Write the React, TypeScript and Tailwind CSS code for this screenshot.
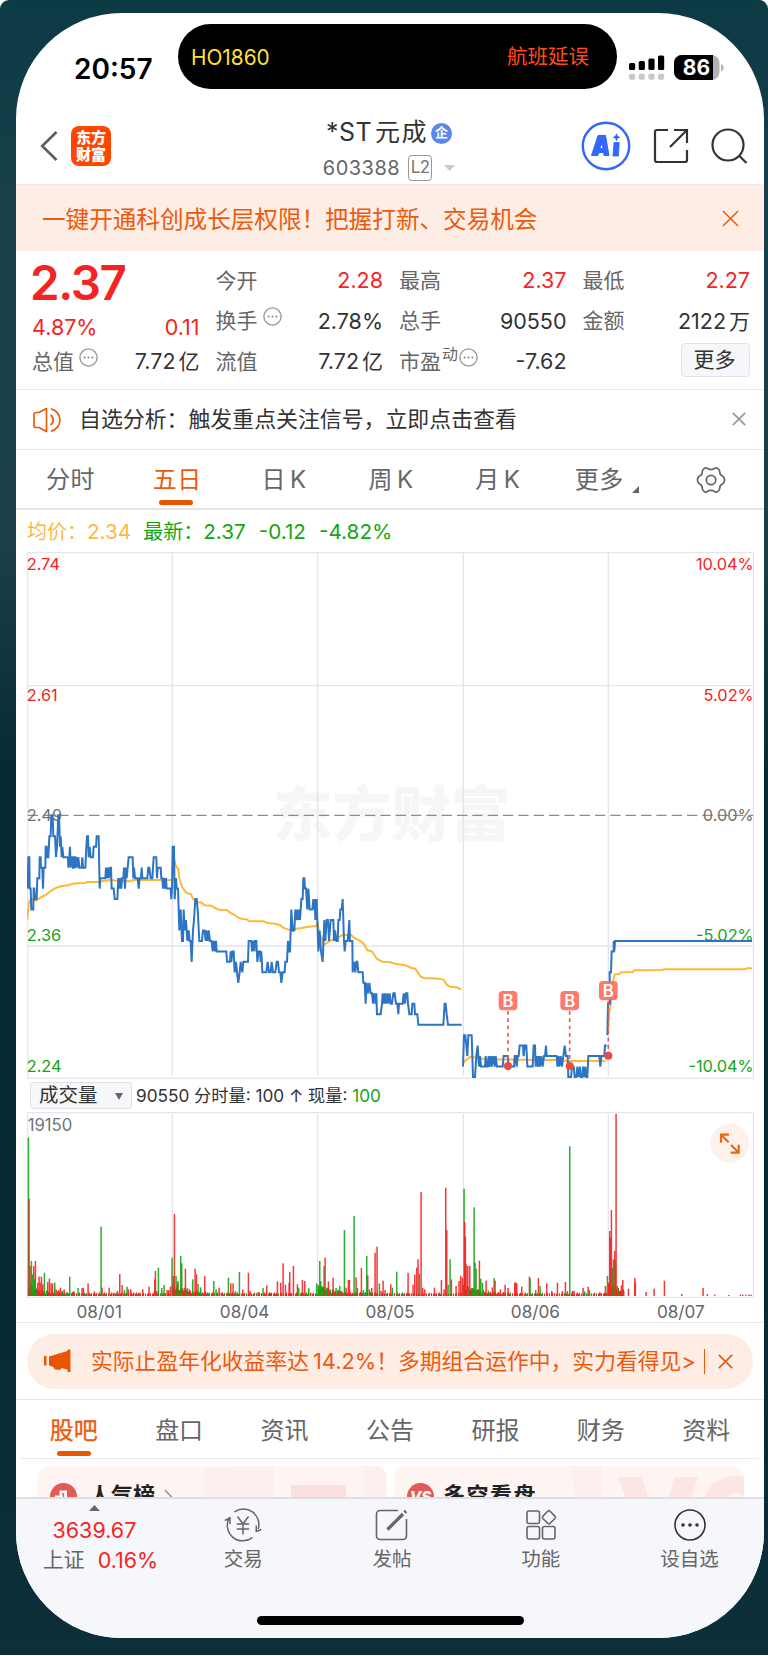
import React from "react";

const RED = "#f52323";
const GREEN = "#14a514";

type Quote = { label: string; value: string; red?: boolean; info?: boolean; sup?: string };

const quoteColumns: Quote[][] = [
  [
    { label: "今开", value: "2.28", red: true },
    { label: "换手", value: "2.78%", info: true },
    { label: "流值", value: "7.72亿" },
  ],
  [
    { label: "最高", value: "2.37", red: true },
    { label: "总手", value: "90550" },
    { label: "市盈", value: "-7.62", info: true, sup: "动" },
  ],
];

const periods = ["分时", "五日", "日K", "周K", "月K", "更多"];
const sections = ["股吧", "盘口", "资讯", "公告", "研报", "财务", "资料"];
const dates = ["08/01", "08/04", "08/05", "08/06", "08/07"];

// Both charts are drawn in thirds of a pixel: 2181 units for 727px.
const gridX = [436, 872, 1309, 1744];

// Price ticks: x and number of 0.01 steps below 2.49. dx shifts the whole run.
const priceRuns: { dx: number; pts: string }[] = [
  {
    dx: -81,
    pts: "83,7 85,4 88,4 89,7 92,7 94,9 100,9 101,7 103,7 105,8 110,8 112,6 118,6 119,4 122,4 123,5 127,5 129,7 131,5 136,5 137,3 140,3 141,4 145,4 148,2 152,2 154,0 158,0 160,2 165,2 168,4 171,3 175,0 177,0 180,3 182,2 185,4 187,3 190,4 204,4 205,5 208,4 210,3 212,5 214,4 217,4 219,5 222,5 223,4 226,4 228,5 230,4 233,5 235,4 238,5 245,5 247,4 249,5 256,5 259,3 261,2 264,2 266,4 269,3 272,4 279,4 281,3 288,3 290,2 296,2 299,7 301,6 316,6 318,5 321,6 324,5 327,6 330,5 333,5 335,7 341,7 344,8 352,8 355,6 358,7 361,6 364,7 366,6 370,6 372,5 375,7 378,5 380,6 383,5 386,4 398,4 400,6 402,5 405,6 413,6 416,7 419,6 423,6 425,5 427,6 442,6 445,5 448,5 452,6 457,6 461,4 469,4 471,6 473,5 482,5 484,6 487,6 489,7 492,6 494,7 498,6 500,7 512,7 514,8 516,7 518,3 522,3 524,8 528,6 530,7 534,7 536,9 538,11 542,9 546,12 549,12 551,9 554,11 558,10 562,12 566,11 569,12 572,12 575,14 579,11 582,10 586,8 590,8 593,9 598,12 606,12 609,11 614,11 617,12 619,11 623,12 626,11 630,12 635,12 638,13 642,12 645,13 648,12 650,13 679,13 681,14 690,14 692,13 694,14 697,13 701,13 704,15 708,14 711,15 715,16 719,15 722,14 727,15 730,14 744,14 746,12 754,12 756,13 759,12 763,13 765,12 769,12 772,14 776,13 780,13 782,14 784,13 787,15 799,15 803,14 807,15 812,15 815,14 819,15 826,15 830,14 834,14 837,15 841,15 844,16 848,15 854,15 856,14 861,14 864,12 867,13 870,13 874,9 878,11 883,11 886,9 889,10 893,9 895,10 898,9 900,10 902,9 904,8 908,8 910,6 913,6 915,7 918,7 922,9 925,7 929,9 937,9 940,8 942,9 944,8 946,10 950,8 952,10 955,13 959,11 963,13 968,14 973,10 976,12 980,10 984,10 987,12 992,10 1000,10 1002,12 1005,11 1009,12 1013,12 1015,10 1019,10 1021,9 1025,9 1028,8 1032,12 1034,13 1037,12 1043,12 1046,11 1048,10 1050,12 1057,12 1058,15 1062,14 1066,15 1069,14 1072,14 1075,15 1088,15 1090,16 1094,16 1097,18 1100,16 1104,17 1108,16 1112,17 1116,17 1119,18 1122,17 1127,18 1129,17 1131,19 1142,19 1146,18 1148,17 1152,18 1155,17 1158,18 1162,17 1165,18 1169,17 1172,18 1176,18 1180,17 1184,17 1188,18 1192,18 1195,19 1197,18 1208,18 1211,17 1215,18 1218,17 1222,17 1224,18 1228,19 1235,19 1237,18 1243,18 1245,19 1252,19 1255,20 1330,20 1334,18 1337,18 1340,19 1344,20 1385,20",
  },
  {
    dx: 1239,
    pts: "69,24 72,21 76,21 79,22 82,23 85,21 95,21 99,25 105,25 109,23 113,22 117,24 120,23 123,24 135,24 137,23 140,24 143,24 146,23 149,24 153,23 155,24 160,23 164,24 167,23 171,24 188,24 191,23 203,23 206,24 222,24 224,23 227,23 230,24 233,23 236,23 239,22 249,22 251,23 254,22 259,22 262,24 278,24 281,22 285,22 287,24 291,23 294,24 297,23 300,24 304,23 308,24 312,23 315,23 318,22 320,23 350,23 352,24 355,23 358,24 362,23 366,24 370,23 374,22 378,23 383,23 385,25 393,25 396,24 401,24 404,25 409,25 412,24 415,25 420,24 422,25 427,25 429,24 433,25 436,24 439,25 442,25 445,23 478,23 481,24 484,23 493,23 495,22 500,22",
  },
  { dx: 1239, pts: "502,21 504,18 510,18 509,15 513,15 515,13 521,13 521,12 523,13 525,12 936,12" },
];

// Average price line, y counted from 684 units below the top of the chart.
const averageRuns: { dx: number; pts: string }[] = [
  {
    dx: -81,
    pts: "82,418 86,370 92,358 108,362 118,355 130,348 140,343 150,335 160,328 170,323 185,318 205,316 215,312 232,310 255,309 262,306 295,306 310,303 330,300 352,302 390,304 398,300 517,300 521,235 528,258 535,268 538,295 545,318 555,335 562,340 573,343 580,358 595,367 606,368 612,376 635,377 645,384 658,389 680,390 690,398 705,405 715,413 728,417 740,418 748,424 790,424 802,429 825,431 838,434 848,442 865,449 878,452 885,447 905,444 925,440 950,438 953,425 956,455 962,468 972,494 982,488 998,478 1012,474 1025,466 1053,464 1062,474 1080,482 1092,492 1102,511 1116,514 1130,536 1148,545 1168,546 1185,551 1215,556 1235,564 1246,566 1262,590 1272,594 1320,596 1332,600 1340,614 1350,620 1370,622 1384,629",
  },
  { dx: 1239, pts: "69,850 78,840 92,830 110,834 140,838 240,839 350,840 385,843 497,843" },
  { dx: 1239, pts: "503,760 508,700 515,650 520,600 524,583 538,582 543,577 578,576 583,571 668,570 672,568 915,568 920,565 936,565" },
];

const buys = [
  { x: 1443, box: 1312, dot: 1542 },
  { x: 1628, box: 1312, dot: 1542 },
  { x: 1744, box: 1282, dot: 1511 },
];

// Volume bars: colour, x, height
const volumes =
  "g4,475 r6,292 r9,90 g13,105 g16,65 r20,90 r25,105 g22,50 r32,40 r36,58 r39,40 r43,58 g52,70 r47,35 r62,42 r67,52 r72,38 r76,38 g83,40 r87,20 r95,18 r100,25 g105,15 r111,20 g118,10 g128,58 r140,15 g153,24 r165,24 r169,25 r183,38 r202,14 g222,208 r225,25 r246,25 r254,10 r261,10 r271,15 r278,66 r285,33 g292,18 g300,28 r304,20 r311,20 r320,10 r337,10 r347,20 r366,28 r383,50 r385,75 g394,85 r389,15 g404,24 g411,33 r420,18 r425,18 r430,28 g435,115 r439,60 g447,60 g453,45 r451,40 r442,246 g461,120 g464,98 r467,20 r475,82 r472,25 g481,24 r487,20 g497,50 r504,82 r508,65 g513,36 g521,26 r533,60 g544,8 g560,45 g567,20 r576,25 r583,10 g604,55 r611,38 r618,38 g625,15 g637,72 r647,20 r664,70 r669,15 g678,5 r693,12 g708,24 r719,32 r731,10 r751,44 r761,40 r768,98 r775,34 r786,40 r788,72 r799,90 r811,35 g815,25 r826,48 r833,45 g845,24 r851,10 g869,38 g874,30 g878,105 g881,45 g891,90 r894,115 g899,25 r904,44 g909,20 r918,55 g927,24 r933,15 g938,30 r944,15 g952,198 r957,25 r964,48 r967,48 g981,240 r987,56 g991,24 r1003,84 g1009,18 g1019,120 r1022,62 g1027,20 r1034,24 r1044,130 r1050,148 g1057,38 r1062,15 r1068,46 r1074,18 r1091,35 g1096,25 g1109,73 r1143,70 r1158,34 r1163,64 r1169,85 r1173,110 g1177,66 r1182,312 r1187,24 r1193,20 r1222,25 r1243,48 r1251,20 r1256,325 r1259,198 g1263,34 g1269,110 r1273,50 r1287,30 r1296,45 r1301,60 r1306,55 g1311,322 r1313,222 r1315,178 r1317,95 r1322,90 r1328,90 g1323,20 r1333,24 g1341,266 g1344,100 g1347,82 r1357,106 g1361,52 g1366,40 r1377,46 r1396,26 g1401,54 r1404,46 r1420,20 r1434,34 r1443,24 r1463,40 r1466,40 r1469,38 r1484,28 r1507,58 g1509,52 g1526,18 r1534,54 g1539,30 r1559,38 r1574,15 r1591,40 r1606,15 r1615,42 g1621,15 g1628,449 r1636,15 r1641,16 r1668,24 g1673,14 r1683,28 g1687,18 r1719,10 r1735,30 g1741,60 r1745,40 r1748,195 r1750,175 r1753,258 g1756,85 r1759,110 r1763,136 g1765,106 r1767,546 r1771,30 r1783,32 r1787,48 r1790,14 r1804,22 r1823,54 r1825,40 r1857,12 r1881,22 r1912,46 r1964,6 r2028,24 r2041,6 r2063,4 r2105,3 r2140,4 r2147,4 r2156,4 r2165,4 r2172,4"
    .split(" ")
    .map((s) => {
      const [x, h] = s.slice(1).split(",").map(Number);
      return { x, h, color: s[0] === "g" ? GREEN : RED };
    });

// Low background trading between the named bars, heavier right after each open
const lowVolumes = Array.from({ length: 600 }, (_, i) => {
  const x = 4 + i * 3;
  const r = ((i * 7919 + 13) % 101) / 101;
  const r2 = ((i * 3571 + 29) % 97) / 97;
  const sinceOpen = x % 436;
  const h = 2 + r * 9 + Math.exp(-sinceOpen / 45) * (12 + r2 * 24);
  return { x, h, color: r2 > 0.7 ? GREEN : RED };
}).filter((b) => b.x < 1790 && b.h > 5);

function toPath(pts: string, dx: number, y: (v: number) => number) {
  return pts
    .split(" ")
    .map((p) => {
      const [a, b] = p.split(",").map(Number);
      return `${a + dx},${y(b)}`;
    })
    .join(" ");
}

function Info() {
  return (
    <svg className="w-[19px] h-[19px] shrink-0" viewBox="0 0 19 19" fill="none">
      <circle cx="9.5" cy="9.5" r="8.6" stroke="#999" strokeWidth="1.4" />
      <circle cx="5.6" cy="9.5" r="1" fill="#888" />
      <circle cx="9.5" cy="9.5" r="1" fill="#888" />
      <circle cx="13.4" cy="9.5" r="1" fill="#888" />
    </svg>
  );
}

function Close({ className, width = 1.6 }: { className: string; width?: number }) {
  return (
    <svg className={className} viewBox="0 0 18 18" fill="none" stroke="currentColor" strokeWidth={width}>
      <path d="M1 1 17 17M17 1 1 17" />
    </svg>
  );
}

function QuoteRow({ q }: { q: Quote }) {
  const m = q.value.match(/^([-\d.%]+)(.*)$/)!;
  return (
    <div className="flex h-[40.5px] items-center">
      <span className="-ml-px text-[21px] text-[#666]">{q.label}</span>
      {q.sup && <span className="-mt-3.5 ml-px text-[16px] text-[#666]">{q.sup}</span>}
      {q.info && <span className={q.sup ? "-mt-2 ml-px" : "-mt-2 ml-[5px]"}><Info /></span>}
      <span className={`ml-auto text-[21.5px] ${q.red ? "text-[#f52323]" : "text-[#333]"}`}>
        {m[1]}
        {m[2] && <span className="ml-[3px] text-[21px]">{m[2]}</span>}
      </span>
    </div>
  );
}

function StatusBar() {
  return (
    <div className="flex h-[85px] shrink-0 items-start">
      <span className="ml-[58px] mt-[39px] w-[79px] text-[28px] leading-[34px] font-semibold text-black">20:57</span>
      <div className="ml-[25px] mt-[11px] flex h-[65px] w-[439px] items-center justify-between rounded-full bg-black pl-[13px] pr-[28px] pt-[2px]">
        <span className="text-[20.8px] text-[#ffe135]">HO1860</span>
        <span className="text-[20.5px] text-[#ff4a1c]">航班延误</span>
      </div>
      <svg className="ml-[12px] mt-[42px] h-[26px] w-[97px]" viewBox="0 0 97 26">
        <g fill="#000">
          <rect x="0" y="8" width="6.2" height="7" rx="1.5" />
          <rect x="9.7" y="6" width="6.2" height="9" rx="1.5" />
          <rect x="19.4" y="3.5" width="6.2" height="11.5" rx="1.5" />
          <rect x="29" y="0.5" width="6.2" height="14.5" rx="1.5" />
        </g>
        <g fill="#c8c8c8">
          <rect x="0" y="18.7" width="6.2" height="6" rx="1.8" />
          <rect x="9.7" y="18.7" width="6.2" height="6" rx="1.8" />
          <rect x="19.4" y="18.7" width="6.2" height="6" rx="1.8" />
          <rect x="29" y="18.7" width="6.2" height="6" rx="1.8" />
        </g>
        <rect x="45" y="0" width="45.5" height="25" rx="8" fill="#b3b3b3" />
        <path d="M53 0H84V25H53a8 8 0 0 1-8-8V8a8 8 0 0 1 8-8Z" fill="#000" />
        <path d="M92 9c3.500 1 3.500 6.500 0 7.500Z" fill="#b3b3b3" />
        <text x="67.500" y="20" textAnchor="middle" fontSize="21" fontWeight="700" fill="#fff">86</text>
      </svg>
    </div>
  );
}

function Header() {
  return (
    <div className="flex h-[87px] shrink-0 items-start border-b border-[#e9e9ed]">
      <div className="flex w-[240px] items-center pl-6 pt-[28px]">
        <svg className="h-[30px] w-[18px]" viewBox="0 0 18 30" fill="none" stroke="#5d5d5d" strokeWidth="2.600">
          <path d="M16.500 1 2.200 15l14.300 14" />
        </svg>
        <div className="ml-[13px] flex h-[40px] w-[40px] flex-col items-center justify-center rounded-[8px] bg-[#ff4500] text-[15px] leading-[17px] font-black text-white">
          <span>东方</span>
          <span>财富</span>
        </div>
      </div>
      <div className="w-[268px] pt-[16px]">
        <div className="flex h-[38px] items-center justify-center pr-[2px] text-[25px] text-[#333]">
          <span className="tracking-[0.5px]">*ST</span>
          <span className="ml-[3px] tracking-[1.5px]">元成</span>
          <span className="ml-[3px] flex h-[21px] w-[21px] items-center justify-center rounded-full bg-[#5c87e8] text-[13px] font-bold text-white">企</span>
        </div>
        <div className="flex h-[32px] items-center justify-center pr-[2px] text-[20px] text-[#666]">
          <span className="tracking-[0.5px]">603388</span>
          <span className="ml-2 flex h-[26px] w-[24px] items-center justify-center rounded-[4px] border border-[#999] text-[17px] tracking-[-0.5px] text-[#777]">L2</span>
          <svg className="ml-3 h-[6px] w-[11px]" viewBox="0 0 11 6"><path d="M0 0H11L5.500 6Z" fill="#c9c9c9" /></svg>
        </div>
      </div>
      <div className="flex flex-1 items-center pl-[57px] pt-[23px]">
        <svg className="h-[50px] w-[50px]" viewBox="0 0 50 50">
          <circle cx="25" cy="25" r="23.200" fill="none" stroke="#3366ff" strokeWidth="2.400" />
          <path fillRule="evenodd" d="M17 14.500h7.500l3.500 20h-5l-.5-3h-4.500l-1.200 3H10.500ZM18.600 27.500h3.400l-.7-6Z" fill="#3366ff" stroke="#3366ff" strokeWidth="1" strokeLinejoin="round" />
          <path d="M33 21.500h5.200L37.400 35h-5.500Z" fill="#3366ff" stroke="#3366ff" strokeWidth=".8" strokeLinejoin="round" />
          <path d="m35.500 12.200 1.300 2.700 2.700 1.300-2.700 1.300-1.300 2.700-1.300-2.700-2.700-1.300 2.700-1.300Z" fill="#3366ff" />
        </svg>
        <svg className="ml-[21px] h-[38px] w-[38px]" viewBox="0 0 38 38" fill="none" stroke="#333" strokeWidth="2.200">
          <path d="M16 3H5a2 2 0 0 0-2 2v28a2 2 0 0 0 2 2h28a2 2 0 0 0 2-2V23" />
          <path d="M18 20 35 3M22 3H35V16" />
        </svg>
        <svg className="ml-[20px] h-[38px] w-[38px]" viewBox="0 0 38 38" fill="none" stroke="#333" strokeWidth="2.200">
          <circle cx="18" cy="18" r="15.500" />
          <path d="M29 28.500 36.500 36" />
        </svg>
      </div>
    </div>
  );
}

function PriceChart() {
  return (
    <svg className="block h-[527px] w-[727px]" viewBox="0 0 2181 1581" fill="none">
      <text x="1094" y="852" textAnchor="middle" fontSize="178" fontWeight="900" fill="#f6f6f6">东方财富</text>
      <g stroke="#e2e5ee" strokeWidth="4">
        {gridX.map((x) => <path key={x} d={`M${x} 2V1573`} />)}
        <path d="M2 401H2179M2 1182H2179" />
      </g>
      <path d="M2 2H2179V1579H2Z" stroke="#e6e6e9" strokeWidth="4" />
      <path d="M2 790H2179" stroke="#8c8c8c" strokeWidth="4" strokeDasharray="31 15" />
      <g fontSize="49" fill={RED}>
        <text x="-1" y="54">2.74</text>
        <text x="-1" y="447">2.61</text>
        <text x="2180" y="54" textAnchor="end">10.04%</text>
        <text x="2180" y="447" textAnchor="end">5.02%</text>
      </g>
      <g fontSize="49" fill="#737373">
        <text x="-1" y="807">2.49</text>
        <text x="2180" y="807" textAnchor="end">0.00%</text>
      </g>
      <g fontSize="49" fill={GREEN}>
        <text x="-1" y="1167">2.36</text>
        <text x="-1" y="1560">2.24</text>
        <text x="2180" y="1167" textAnchor="end">-5.02%</text>
        <text x="2180" y="1560" textAnchor="end">-10.04%</text>
      </g>
      {averageRuns.map((r, i) => (
        <polyline key={i} points={toPath(r.pts, r.dx, (v) => v + 684)} stroke="#fdb933" strokeWidth="6" />
      ))}
      {priceRuns.map((r, i) => (
        <polyline key={i} points={toPath(r.pts, r.dx, (v) => 790 + v * 31.4)} stroke="#2e74c4" strokeWidth="6" />
      ))}
      {buys.map((b) => (
        <g key={b.x}>
          <path d={`M${b.x} ${b.box + 65}V${b.dot}`} stroke="#f8564a" strokeWidth="5" strokeDasharray="11 11" />
          <circle cx={b.x} cy={b.dot} r="12" fill="#ec4b45" />
          <rect x={b.x - 28} y={b.box + 5} width="56" height="58" rx="12" fill="#ff6f5f" fillOpacity=".92" />
          <text x={b.x} y={b.box + 52} textAnchor="middle" fontSize="50" fontWeight="600" fill="#fff">B</text>
        </g>
      ))}
    </svg>
  );
}

function VolumeChart() {
  return (
    <svg className="block h-[186px] w-[727px]" viewBox="0 0 2181 558" fill="none">
      <g stroke="#e2e5ee" strokeWidth="4">
        {gridX.map((x) => <path key={x} d={`M${x} 6V552`} />)}
      </g>
      <path d="M2 2H2179V556H2Z" stroke="#e6e6e9" strokeWidth="4" />
      <text x="2" y="56" fontSize="50" fill="#737373">19150</text>
      {lowVolumes.map((b, i) => (
        <rect key={i} x={b.x - 1.5} y={552 - b.h} width="3.5" height={b.h} fill={b.color} />
      ))}
      {volumes.map((b, i) => (
        <rect key={i} x={b.x - 2} y={552 - b.h} width="4.5" height={b.h} fill={b.color} fillOpacity=".9" />
      ))}
      <circle cx="2108" cy="94" r="58" fill="#fef1ea" />
      <g stroke="#ee6414" strokeWidth="6.500">
        <path d="M2082 92V68h24M2083 69l22 22" />
        <path d="M2135 98v24h-24M2134 121l-22-22" />
      </g>
    </svg>
  );
}

function BottomBar() {
  const icon = "h-[36px] w-[40px]";
  const items = [
    {
      label: "交易",
      svg: (
        <svg className={icon} viewBox="0 0 40 36" fill="none" stroke="#666" strokeWidth="1.500">
          <path d="M11.500 4.800A15.500 15.500 0 0 1 35.200 22M6.500 10.500A15.500 15.500 0 0 0 29.500 30.500" />
          <path d="m1.800 13.500 5.200-2.500v6M38.300 22.500l-5 2v-6" />
          <path d="m14.500 9.500 5.500 7.500 5.500-7.500M20 17v10.500M13.800 17h12.400M13.800 22h12.400" />
        </svg>
      ),
    },
    {
      label: "发帖",
      svg: (
        <svg className={icon} viewBox="0 0 40 36" fill="none" stroke="#666" strokeWidth="1.600">
          <path d="M26 3.500H8a3.500 3.500 0 0 0-3.500 3.500V29A3.500 3.500 0 0 0 8 32.500H31a3.500 3.500 0 0 0 3.500-3.500V12" />
          <path d="M15.500 22.500 31 7" strokeWidth="3.200" />
          <path d="m32.500 5.500 1.500-1.500" strokeWidth="3.200" />
        </svg>
      ),
    },
    {
      label: "功能",
      svg: (
        <svg className={icon} viewBox="0 0 40 36" fill="none" stroke="#666" strokeWidth="1.600">
          <rect x="6" y="4" width="12.500" height="12.500" rx="2" />
          <rect x="6" y="19.500" width="12.500" height="12.500" rx="2" />
          <rect x="21.500" y="19.500" width="12.500" height="12.500" rx="2" />
          <path d="m26.700 4.300-4.800 4.800a1.700 1.700 0 0 0 0 2.400l4.800 4.800a1.700 1.700 0 0 0 2.400 0l4.800-4.800a1.700 1.700 0 0 0 0-2.400l-4.800-4.800a1.700 1.700 0 0 0-2.400 0Z" />
        </svg>
      ),
    },
    {
      label: "设自选",
      svg: (
        <svg className={icon} viewBox="0 0 40 36" fill="none">
          <circle cx="20" cy="18" r="15" stroke="#333" strokeWidth="1.600" />
          <circle cx="13" cy="18" r="1.800" fill="#333" />
          <circle cx="20" cy="18" r="1.800" fill="#333" />
          <circle cx="27" cy="18" r="1.800" fill="#333" />
        </svg>
      ),
    },
  ];
  return (
    <div className="flex h-[141px] shrink-0 flex-col items-center border-t-2 border-[#dcdfe5] bg-[#f6f7fa]">
      <div className="flex w-full flex-1 pl-[4px]">
        <div className="flex flex-1 flex-col items-center text-[21.5px] text-[#f52323]">
          <svg className="mt-[6px] h-[6px] w-[11px]" viewBox="0 0 11 6"><path d="M0 6H11L5.500 0Z" fill="#666" /></svg>
          <span className="mt-[4px] leading-[30px]">3639.67</span>
          <div className="flex gap-[13px] leading-[30px] ml-3">
            <span className="text-[21px] text-[#666]">上证</span>
            <span>0.16%</span>
          </div>
        </div>
        {items.map((it) => (
          <div key={it.label} className="flex flex-1 flex-col items-center pt-[8px] text-[19.5px] leading-[30px] text-[#666]">
            {it.svg}
            <span className="mt-px">{it.label}</span>
          </div>
        ))}
      </div>
      <div className="mb-[13px] h-[9px] w-[267px] rounded-full bg-black" />
    </div>
  );
}

export default function App() {
  return (
    <div className="h-[1656px] w-[768px] overflow-hidden bg-white font-['Inter','Noto_Sans_CJK_SC',sans-serif]">
      <div className="h-[1655px] overflow-hidden rounded-[9px] rounded-b-none bg-[linear-gradient(to_bottom,#0c3a45_0%,#17404a_12%,#1b3f49_33%,#052a34_47%,#052a34_75%,#0c2f39_100%)] pl-4 pt-[13px]">
        <div className="flex h-[1625px] w-[748px] flex-col overflow-hidden rounded-[106px] bg-white">
          <StatusBar />
          <Header />

          <div className="flex h-[66px] shrink-0 items-center justify-between bg-[#fdede5] pl-[26px] pr-[25px] text-[#ee5a0c]">
            <span className="pt-[3px] text-[23.6px]">一键开通科创成长层权限！把握打新、交易机会</span>
            <Close className="h-[17px] w-[17px]" />
          </div>

          {/* Quote panel */}
          <div className="flex h-[139px] shrink-0 gap-[17px] border-b border-[#e9e9ed] px-[17px] pt-[9px] pr-[14px] text-[21px]">
            <div className="flex flex-1 flex-col text-[#f52323]">
              <div className="-ml-[3px] h-[46px] text-[47.5px] leading-[45px] font-semibold tracking-[-1.4px]">2.37</div>
              <div className="-ml-px flex h-[41px] items-center justify-between pt-px text-[21.5px]">
                <span>4.87%</span>
                <span>0.11</span>
              </div>
              <div className="-mt-[6px]"><QuoteRow q={{ label: "总值", value: "7.72亿", info: true }} /></div>
            </div>
            {quoteColumns.map((col, i) => (
              <div key={i} className="flex-1">
                {col.map((q) => <QuoteRow key={q.label} q={q} />)}
              </div>
            ))}
            <div className="flex-1">
              <QuoteRow q={{ label: "最低", value: "2.27", red: true }} />
              <QuoteRow q={{ label: "金额", value: "2122万" }} />
              <div className="flex h-[38px] items-center justify-end">
                <span className="flex h-[34px] w-[69px] items-center justify-center rounded-[4px] border border-[#dfe1e6] bg-[#f6f7fa] pr-[2px] text-[#333]">更多</span>
              </div>
            </div>
          </div>

          {/* Notice */}
          <div className="flex h-[60px] shrink-0 items-center border-b border-[#e9e9ed] pl-[17px] pr-[18px]">
            <svg className="h-[26px] w-[29px]" viewBox="0 0 29 26" fill="none" stroke="#ee5a0c" strokeWidth="1.700" strokeLinejoin="round">
              <path d="M6 5.500H3A2 2 0 0 0 1 7.500V18.500A2 2 0 0 0 3 20.500H6L13.500 24.500V1.500Z" />
              <path d="M17.500 8a6 6 0 0 1 0 10M18 1.800a11.500 11.500 0 0 1 0 22.400" />
            </svg>
            <span className="ml-[17px] text-[21.9px] text-[#333]">自选分析：触发重点关注信号，立即点击查看</span>
            <Close className="ml-auto mb-[2px] h-[14px] w-[14px] text-[#999]" width={2.2} />
          </div>

          {/* Period tabs */}
          <div className="flex h-[60px] shrink-0 border-b-2 border-[#e3e4e7] text-[24px] text-[#666]">
            {periods.map((p) => (
              <div key={p} className={`flex flex-1 flex-col items-center pt-[12px] ${p === "五日" ? "text-[#ee5a0c]" : ""}`}>
                <span className={`flex items-end leading-[36px] tracking-[0.5px] ${p === "更多" ? "ml-1.5" : "ml-0.5"}`}>
                  {p.endsWith("K") ? <>{p[0]}<span className="ml-1">K</span></> : p}
                  {p === "更多" && (
                    <svg className="mb-[5px] ml-2 h-[7px] w-[7px]" viewBox="0 0 7 7"><path d="M7 0V7H0Z" fill="#666" /></svg>
                  )}
                </span>
                {p === "五日" && <span className="mt-[2px] h-[5px] w-[34px] rounded-full bg-[#ea5504]" />}
              </div>
            ))}
            <div className="flex flex-1 items-start justify-center pt-[15px]">
              <svg className="h-[30px] w-[30px]" viewBox="0 0 30 30" fill="none" stroke="#666" strokeWidth="1.700" strokeLinejoin="round">
                <path d="M8.200 3.500Q9.300 2.200 11 3.300Q15 5.800 19 3.300Q20.700 2.200 21.800 3.500Q23.800 4.800 23.800 7.200Q23.800 9.800 26.400 11Q28.500 12 28.500 15Q28.500 18 26.400 19Q23.800 20.200 23.800 22.800Q23.800 25.200 21.800 26.500Q20.700 27.800 19 26.700Q15 24.200 11 26.700Q9.300 27.800 8.200 26.500Q6.200 25.200 6.200 22.800Q6.200 20.200 3.600 19Q1.500 18 1.500 15Q1.500 12 3.600 11Q6.200 9.800 6.200 7.200Q6.200 4.800 8.200 3.500Z" />
                <circle cx="15" cy="15" r="4.700" />
              </svg>
            </div>
          </div>

          {/* Charts */}
          <div className="shrink-0 border-b border-[#e9e9ed] pl-[11px]">
            <div className="flex h-[42px] items-center pt-[2px] text-[20px] text-[#14a514]">
              <span className="text-[#fdb944]">均价：<span className="text-[20.7px]">2.34</span></span>
              <span className="ml-[12px]">最新：<span className="text-[20.7px]">2.37</span></span>
              <span className="ml-[13px] text-[20.7px]">-0.12</span>
              <span className="ml-[13px] text-[20.7px]">-4.82%</span>
            </div>
            <PriceChart />
            <div className="flex h-[33px] items-center pl-[3px] text-[17px] text-[#333]">
              <span className="mr-1 flex h-[27px] w-[102px] items-center justify-between rounded-[3px] border border-[#dfe1e6] bg-[#f6f7fa] pl-[8px] pr-[8px] pt-px text-[19.5px] leading-none">
                成交量
                <svg className="h-[7px] w-[8px]" viewBox="0 0 8 7"><path d="M0 0H8L4 7Z" fill="#666" /></svg>
              </span>
              <span className="pt-px text-[17.2px]">90550 分时量: 100 ↑ 现量: <span className="text-[#14a514]">100</span></span>
            </div>
            <VolumeChart />
            <div className="flex h-[24px] w-[727px] items-center pt-[3px] text-[17.2px] text-[#666]">
              {dates.map((d) => <span key={d} className="flex-1 pr-px text-center">{d}</span>)}
            </div>
          </div>

          {/* Promo */}
          <div className="flex h-[77px] shrink-0 items-center border-b border-[#e9e9ed] px-[11px]">
            <div className="flex h-[55px] w-full items-center rounded-full bg-[#fdede5] pl-[17px] pr-[20px] text-[#ee5a0c]">
              <svg className="h-[24px] w-[27px] shrink-0" viewBox="0 0 27 24" fill="#ea5504">
                <path d="M0 7h2.500v9.500H0ZM5 7.500 23.500 2V.5h3v22.500h-3V20.500L17.500 19c-.5 2-2.500 2.500-4.500 1.500-1 .5-3.500-.5-3.500-2.500L5 16.500Z" />
              </svg>
              <span className="ml-[20px] whitespace-nowrap text-[21.8px]">实际止盈年化收益率达<span className="ml-1">14.2%</span>！多期组合运作中，实力看得见&gt;</span>
              <span className="ml-auto h-[25px] w-[1.500px] bg-[#ee5a0c]" />
              <Close className="ml-[13px] h-[15px] w-[15px] shrink-0" width={2} />
            </div>
          </div>

          {/* Section tabs */}
          <div className="mx-[5px] flex h-[59px] shrink-0 border-b border-[#e9e9ed] text-[24px] text-[#666]">
            {sections.map((s, i) => (
              <div key={s} className={`flex flex-1 flex-col items-center pt-[13px] ${i === 0 ? "text-[#ee5a0c] [-webkit-text-stroke:0.3px_#ee5a0c]" : ""}`}>
                <span className="leading-[36px]">{s}</span>
                {i === 0 && <span className="mt-[2px] h-[5px] w-[34px] rounded-full bg-[#ea5504]" />}
              </div>
            ))}
          </div>

          {/* Cards, cut off by the bottom bar */}
          <div className="flex h-[38px] shrink-0 gap-[7px] overflow-hidden pl-[21px] pt-[7px]">
            <div className="flex h-[60px] w-[350px] overflow-hidden rounded-[12px] bg-[#fef4f2] pl-[13px]">
              <svg className="mt-[17px] h-[27px] w-[27px]" viewBox="0 0 27 27">
                <circle cx="13.500" cy="13.500" r="13.500" fill="#e25a55" />
                <path d="M5 12.500h4.500V7.500h7.500v6.500h5v8H5Z" fill="#fff" />
                <path d="M12 11h1.500V18" stroke="#e25a55" strokeWidth="1.300" fill="none" />
              </svg>
              <span className="ml-[12px] mt-[14px] text-[22px] leading-[30px] font-bold text-[#222]">人气榜</span>
              <svg className="ml-[9px] mt-[23px] h-[16px] w-[9px]" viewBox="0 0 9 16" fill="none" stroke="#999" strokeWidth="1.600"><path d="m1 1 6.500 7L1 15" /></svg>
              <svg className="ml-[31px] h-[60px] w-[182px]" viewBox="0 0 182 60">
                <path d="M0 3 33 0H70L68 60H0Z" fill="#fdefed" />
                <path d="M87 19h55v41H87Z" fill="#fae0de" />
                <path d="M159 0h23v60h-20Z" fill="#fdefed" />
              </svg>
            </div>
            <div className="flex h-[60px] w-[350px] overflow-hidden rounded-[12px] bg-[#fef4f2] pl-[13px]">
              <svg className="mt-[17px] h-[27px] w-[27px]" viewBox="0 0 27 27">
                <circle cx="13.500" cy="13.500" r="13.500" fill="#e25a55" />
                <text x="13.500" y="18.500" textAnchor="middle" fontSize="15" fontWeight="800" fontStyle="italic" fill="#fff">VS</text>
              </svg>
              <span className="ml-[9px] mt-[14px] text-[22px] leading-[30px] font-bold tracking-[1.5px] text-[#222]">多空看盘</span>
              <svg className="ml-auto h-[60px] w-[172px]" viewBox="0 0 172 60">
                <path d="M0 0H30L29 60H6Z" fill="#fdefed" />
                <text x="44" y="88" fontSize="106" fontWeight="900" fill="#fce6e3">VS</text>
              </svg>
            </div>
          </div>

          <BottomBar />
        </div>
      </div>
    </div>
  );
}
